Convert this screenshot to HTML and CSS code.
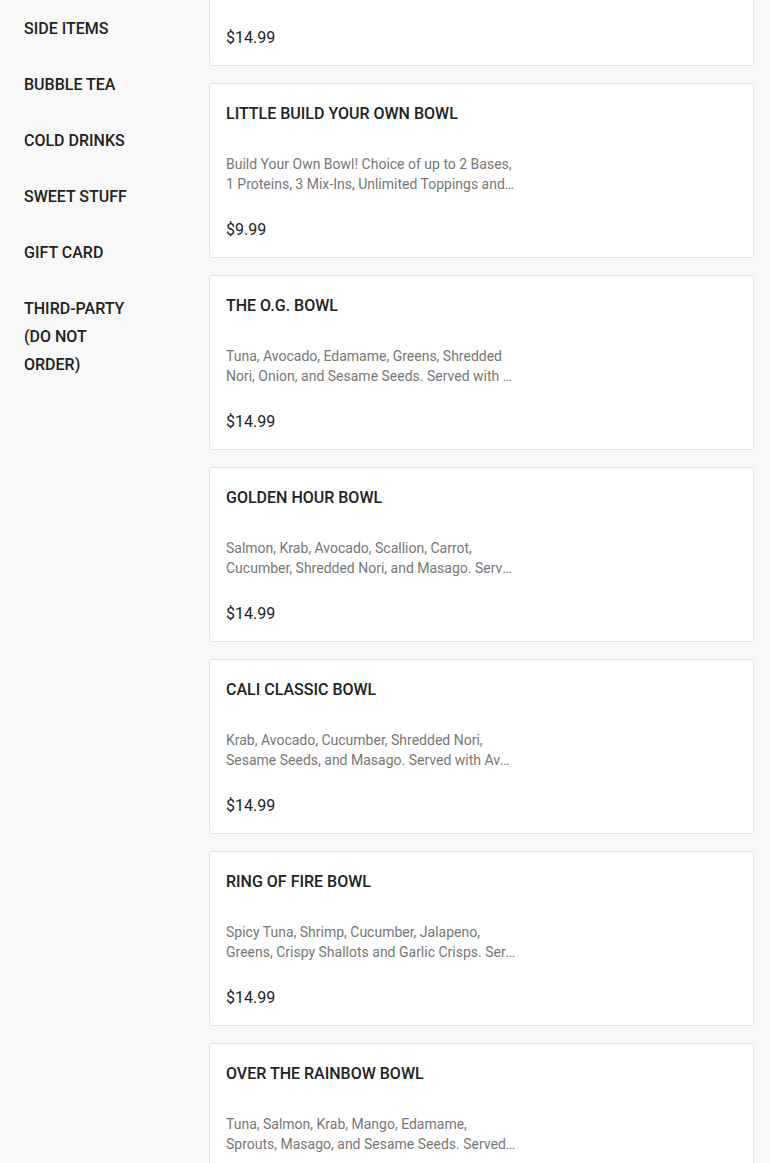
FILE: index.html
```html
<!DOCTYPE html>
<html lang="en">
<head>
<meta charset="utf-8">
<title>Menu</title>
<link rel="stylesheet" href="styles.css">
</head>
<body>
<div class="page">
  <nav class="sidebar">
    <a class="cat">SIDE ITEMS</a>
    <a class="cat">BUBBLE TEA</a>
    <a class="cat">COLD DRINKS</a>
    <a class="cat">SWEET STUFF</a>
    <a class="cat">GIFT CARD</a>
    <a class="cat">THIRD-PARTY (DO NOT ORDER)</a>
  </nav>
  <main class="items">
    <div class="card">
      <div class="title">BUILD YOUR OWN BOWL</div>
      <div class="desc"><span class="line">Build Your Own Bowl! Choice of up to 2 Bases,</span><span class="line clip">2 Proteins, 3 Mix-Ins, Unlimited Toppings and Sauces.</span></div>
      <div class="price">$14.99</div>
    </div>
    <div class="card">
      <div class="title">LITTLE BUILD YOUR OWN BOWL</div>
      <div class="desc"><span class="line">Build Your Own Bowl! Choice of up to 2 Bases,</span><span class="line clip">1 Proteins, 3 Mix-Ins, Unlimited Toppings and Sauces.</span></div>
      <div class="price">$9.99</div>
    </div>
    <div class="card">
      <div class="title">THE O.G. BOWL</div>
      <div class="desc"><span class="line">Tuna, Avocado, Edamame, Greens, Shredded</span><span class="line clip">Nori, Onion, and Sesame Seeds. Served with  Ponzu and Spicy Mayo.</span></div>
      <div class="price">$14.99</div>
    </div>
    <div class="card">
      <div class="title">GOLDEN HOUR BOWL</div>
      <div class="desc"><span class="line">Salmon, Krab, Avocado, Scallion, Carrot,</span><span class="line clip">Cucumber, Shredded Nori, and Masago. Served with Sweet Soy.</span></div>
      <div class="price">$14.99</div>
    </div>
    <div class="card">
      <div class="title">CALI CLASSIC BOWL</div>
      <div class="desc"><span class="line">Krab, Avocado, Cucumber, Shredded Nori,</span><span class="line clip">Sesame Seeds, and Masago. Served with Avocado Sauce.</span></div>
      <div class="price">$14.99</div>
    </div>
    <div class="card">
      <div class="title">RING OF FIRE BOWL</div>
      <div class="desc"><span class="line">Spicy Tuna, Shrimp, Cucumber, Jalapeno,</span><span class="line clip">Greens, Crispy Shallots and Garlic Crisps. Served with Spicy Mayo.</span></div>
      <div class="price">$14.99</div>
    </div>
    <div class="card">
      <div class="title">OVER THE RAINBOW BOWL</div>
      <div class="desc"><span class="line">Tuna, Salmon, Krab, Mango, Edamame,</span><span class="line clip">Sprouts, Masago, and Sesame Seeds. Served with Ponzu.</span></div>
      <div class="price">$14.99</div>
    </div>
  </main>
</div>
</body>
</html>
```
FILE: styles.css
```css
* { box-sizing: border-box; }
html, body {
  margin: 0;
  padding: 0;
  background: #f8f8f8;
  font-family: Roboto, "Liberation Sans", Arial, sans-serif;
  color: #222222;
  overflow: hidden;
}
.page {
  display: flex;
  align-items: flex-start;
  gap: 73px;
  padding-right: 16px;
}
.sidebar {
  display: flex;
  flex-direction: column;
  flex: 0 0 136px;
  padding-left: 24px;
  padding-top: 1px;
}
.cat {
  display: block;
  font-size: 16px;
  font-weight: 500;
  line-height: 28px;
  padding: 14px 0;
  color: #222222;
  text-decoration: none;
}
.items {
  flex: 1;
  display: flex;
  flex-direction: column;
  gap: 17px;
  margin-top: -109px;
}
.card {
  background: #ffffff;
  border: 1px solid #e4e4e4;
  border-radius: 3px;
  padding: 17px 16px 15px;
  height: 175px;
  display: flex;
  flex-direction: column;
}
.title {
  font-size: 16px;
  font-weight: 500;
  line-height: 26px;
  color: #222222;
}
.desc {
  margin-top: 27px;
  width: 291px;
  font-size: 14px;
  line-height: 20px;
  color: #777777;
  height: 40px;
}
.line {
  display: block;
  white-space: nowrap;
}
.clip {
  overflow: hidden;
  text-overflow: ellipsis;
}
.price {
  margin-top: 24px;
  font-size: 16px;
  line-height: 24px;
  color: #222222;
}
```
